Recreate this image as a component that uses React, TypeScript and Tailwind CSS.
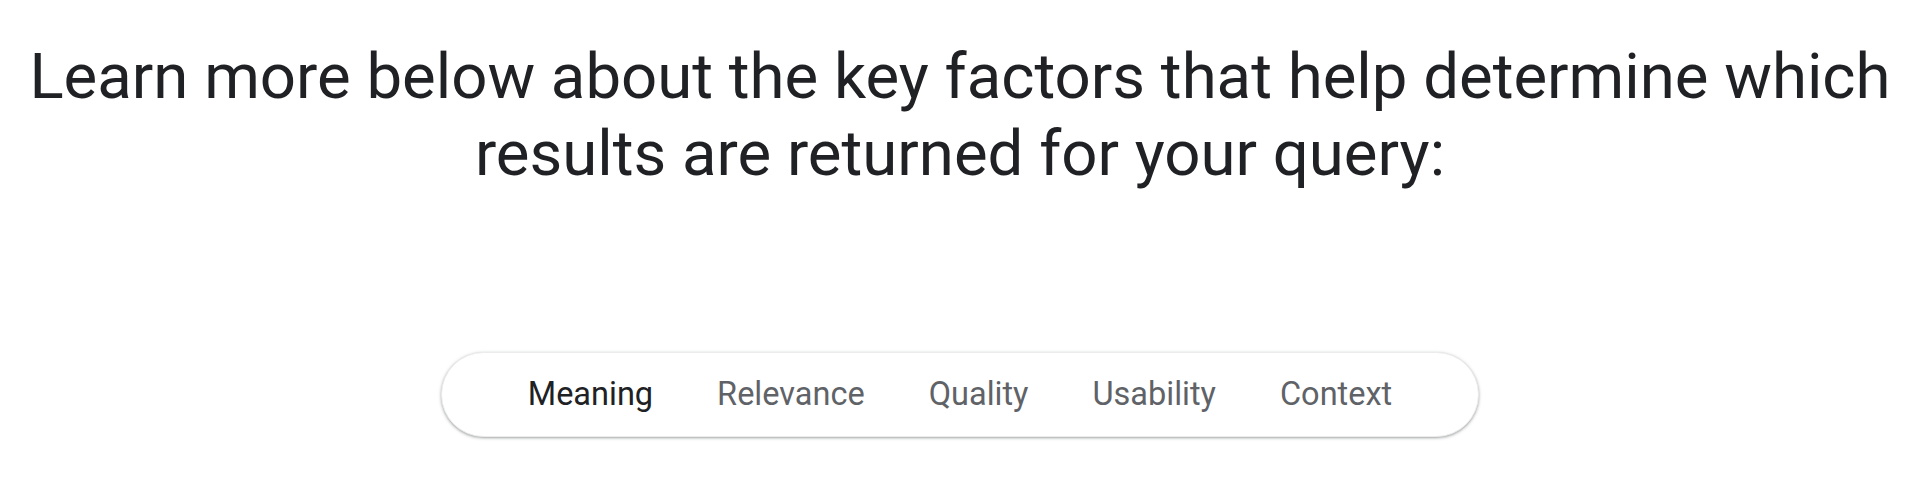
import React, { useState } from "react";

const tabs = ["Meaning", "Relevance", "Quality", "Usability", "Context"] as const;

export default function App() {
  const [active, setActive] = useState<(typeof tabs)[number]>("Meaning");

  return (
    <div className="w-full h-[490px] bg-white font-['Roboto','Liberation_Sans',sans-serif] flex flex-col items-center">
      {/* Intro heading */}
      <h2 className="pt-[38px] text-center text-[63.5px] leading-[77px] text-[#202124] font-normal">
        Learn more below about the key factors that help determine which
        <br />
        results are returned for your query:
      </h2>

      {/* Factor tabs */}
      <nav className="mt-[160px] h-[85px] w-[1038px] rounded-full bg-white border border-[#ececec] shadow-[0_1px_2px_0_rgba(60,64,67,0.3),0_1px_3px_1px_rgba(60,64,67,0.15)] flex items-center justify-center">
        {tabs.map((tab) => (
          <button
            key={tab}
            onClick={() => setActive(tab)}
            className={`px-8 text-[32.5px] leading-none cursor-pointer ${
              active === tab ? "text-[#202124]" : "text-[#5f6368]"
            }`}
          >
            {tab}
          </button>
        ))}
      </nav>
    </div>
  );
}
